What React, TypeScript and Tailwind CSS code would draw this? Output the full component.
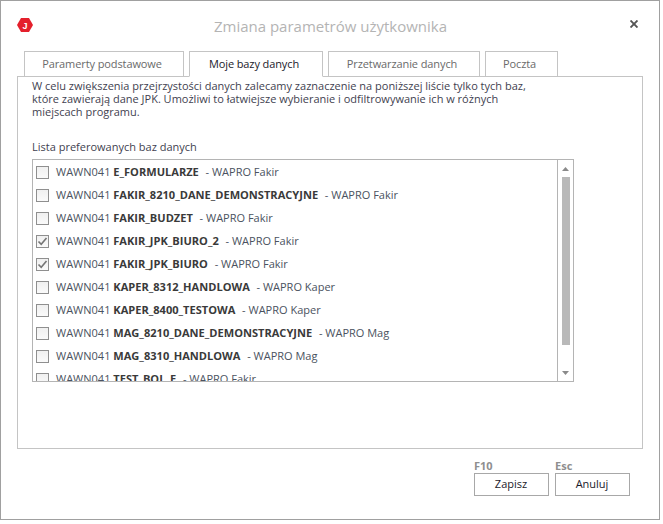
const font = "[font-family:'Open_Sans','Noto_Sans',sans-serif]";

const rows: { bold: string; app: string; checked?: boolean }[] = [
  { bold: "E_FORMULARZE", app: "WAPRO Fakir" },
  { bold: "FAKIR_8210_DANE_DEMONSTRACYJNE", app: "WAPRO Fakir" },
  { bold: "FAKIR_BUDZET", app: "WAPRO Fakir" },
  { bold: "FAKIR_JPK_BIURO_2", app: "WAPRO Fakir", checked: true },
  { bold: "FAKIR_JPK_BIURO", app: "WAPRO Fakir", checked: true },
  { bold: "KAPER_8312_HANDLOWA", app: "WAPRO Kaper" },
  { bold: "KAPER_8400_TESTOWA", app: "WAPRO Kaper" },
  { bold: "MAG_8210_DANE_DEMONSTRACYJNE", app: "WAPRO Mag" },
  { bold: "MAG_8310_HANDLOWA", app: "WAPRO Mag" },
  { bold: "TEST_BOL_E", app: "WAPRO Fakir" },
];

function Row({ bold, app, checked }: { bold: string; app: string; checked?: boolean }) {
  return (
    <div className="flex h-[23px] shrink-0 items-center pl-[3px]">
      <div className="flex h-[13px] w-[13px] items-center justify-center border border-[#8f8f8f] bg-gradient-to-b from-[#f0f0f0] to-[#fafafa]">
        {checked && (
          <svg width="11" height="11" viewBox="0 0 11 11">
            <path d="M1.5 5.5 L4.2 8.3 L9.5 2" fill="none" stroke="#757575" strokeWidth="1.6" />
          </svg>
        )}
      </div>
      <span className="ml-[7px] whitespace-pre text-[11px] text-[#4a5260]">
        WAWN041 <b className="text-[11.07px] font-bold text-[#3a3a3a]">{bold}</b>
        <span className="ml-[1px]">{"  "}- {app}</span>
      </span>
    </div>
  );
}

function Tab({ label, active, w }: { label: string; active?: boolean; w: string }) {
  return (
    <div
      className={`flex h-[26px] items-center justify-center border border-[#c4c4c4] bg-white pr-[4px] text-[11px] tracking-[-0.1px] ${w} ${
        active ? "border-b-white text-[#1a1a2a]" : "text-[#6a6a6a]"
      }`}
    >
      {label}
    </div>
  );
}

export default function App() {
  return (
    <div className={`flex h-[520px] w-[660px] flex-col border border-[#a0a0a0] bg-white ${font}`}>
      <div className="flex h-[50px] shrink-0 items-center pl-[16px] pr-[21px]">
        <svg width="16" height="14" viewBox="0 0 16 14" className="mb-[3px]">
          <polygon points="4,0 12,0 16,7 12,14 4,14 0,7" fill="#e4202c" />
          <text x="8" y="10.5" textAnchor="middle" fontSize="9" fontWeight="700" fill="#fff" fontFamily="Liberation Sans">
            J
          </text>
        </svg>
        <div className="flex-1 pr-[2px] text-center text-[15px] text-[#b4b4b4]">Zmiana parametrów użytkownika</div>
        <svg width="8" height="8" viewBox="0 0 8 8" className="mb-[4px]">
          <path d="M0.5 0.5 L7.5 7.5 M7.5 0.5 L0.5 7.5" stroke="#555" strokeWidth="1.9" />
        </svg>
      </div>

      <div className="relative z-10 -mb-px ml-[23px] flex h-[26px] shrink-0 gap-[5px]">
        <Tab label="Paramerty podstawowe" w="w-[160px]" />
        <Tab label="Moje bazy danych" active w="w-[134px]" />
        <Tab label="Przetwarzanie danych" w="w-[152px]" />
        <Tab label="Poczta" w="w-[73px]" />
      </div>

      <div className="ml-[16px] flex h-[373px] w-[626px] shrink-0 flex-col border border-[#c4c4c4] pl-[14px] pt-[2px]">
        <p className="w-[520px] text-[11px] leading-[13px] text-[#3f3f50]">
          W celu zwiększenia przejrzystości danych zalecamy zaznaczenie na poniższej liście tylko tych baz,
          <br />
          które zawierają dane JPK. Umożliwi to łatwiejsze wybieranie i odfiltrowywanie ich w różnych
          <br />
          miejscach programu.
        </p>
        <div className="mt-[22px] text-[11px] leading-[14px] text-[#3f3f50]">Lista preferowanych baz danych</div>
        <div className="mt-[5px] flex h-[223px] w-[542px] overflow-hidden border border-[#b4b4b4]">
          <div className="flex min-w-0 flex-1 flex-col overflow-hidden pt-[1px]">
            {rows.map((r) => (
              <Row key={r.bold} {...r} />
            ))}
          </div>
          <div className="flex w-[16px] shrink-0 flex-col items-center border-l border-[#b4b4b4]">
            <svg width="7" height="4" viewBox="0 0 7 4" className="mt-[7px]">
              <polygon points="3.5,0 7,4 0,4" fill="#8a8a8a" />
            </svg>
            <div className="mt-[6px] h-[168px] w-[8px] bg-[#b9b9b9]" />
            <svg width="7" height="4" viewBox="0 0 7 4" className="mt-[26px]">
              <polygon points="0,0 7,0 3.5,4" fill="#8a8a8a" />
            </svg>
          </div>
        </div>
      </div>

      <div className="ml-[473px] mt-[10px] flex gap-[6px]">
        {[
          ["F10", "Zapisz"],
          ["Esc", "Anuluj"],
        ].map(([k, l]) => (
          <div key={l} className="flex w-[75px] flex-col">
            <span className="text-[11px] font-bold leading-[14px] text-[#8f8f8f]">{k}</span>
            <button className="h-[23px] border border-[#a8a8a8] bg-white pr-[1px] text-[11px] text-[#1a1a2a]">{l}</button>
          </div>
        ))}
      </div>
    </div>
  );
}
